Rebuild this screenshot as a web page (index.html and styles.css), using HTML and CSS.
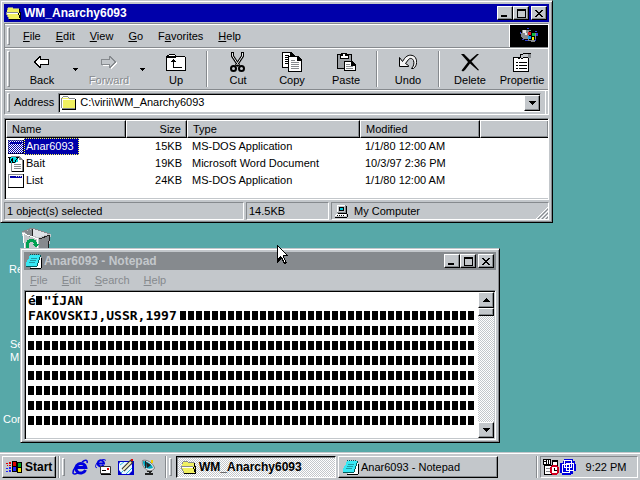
FILE: index.html
```html
<!DOCTYPE html>
<html lang="en">
<head>
<meta charset="utf-8">
<title>Desktop</title>
<link rel="stylesheet" href="styles.css">
</head>
<body>
<svg class="defs" width="0" height="0" aria-hidden="true">
  <defs>
    <pattern id="blue-dither" width="2" height="2" patternUnits="userSpaceOnUse"><path fill="#0000aa" d="M0 0h1v1H0zM1 1h1v1H1z"/></pattern>
  </defs>
  <symbol id="folder-open" viewBox="0 0 16 13">
    <path fill="#f0f060" d="M2 1h6l1 1h4v4h2l-1 6H3L1 8V2z"/>
    <path fill="#868a8e" d="M2 0h5v1H2zM1 1h1v2H1zM7 1h6v1H7zM0 5h12v1H0zM0 6h1v2H0zM1 8h1v2H1zM2 10h1v2H2z"/>
    <path fill="#fff" d="M1 6h11v1H1z"/>
    <path fill="#000" d="M13 2h1v4h-1zM12 6h1v2h-1zM13 8h1v3h-1zM14 5h1v7h-1zM3 12h12v1H3z"/>
  </symbol>
  <symbol id="folder" viewBox="0 0 16 14">
    <path fill="#f0f060" d="M1 2h13v10H1z"/>
    <path fill="#868a8e" d="M2 0h5v1H2zM1 1h1v1H1zM7 1h1v1H7zM8 2h6v1H8zM0 2h1v10H0zM1 12h13v1H1z"/>
    <path fill="#fff" d="M2 1h5v1H2zM1 3h13v1H1zM1 3h1v9H1z"/>
    <path fill="#000" d="M14 3h1v10h-1zM1 13h14v1H1z"/>
  </symbol>
  <symbol id="notepad" viewBox="0 0 16 15">
    <path fill="#fff" d="M5 3h10v11H5z"/>
    <path fill="#000" d="M15 4h1v10h-1zM4 14h11v1H4z"/>
    <path fill="#38e8f4" d="M4 1h10v2l-1 2-1 3-1 3-1 1H0v-2l1-3 2-3z"/>
    <path fill="#005a5a" d="M4 0h1v1H4zM6 0h1v1H6zM8 0h1v1H8zM10 0h1v1h-1zM12 0h1v1h-1zM14 1h1v2h-1zM13 3h1v3h-1zM12 6h1v3h-1zM11 9h1v3h-1zM0 12h11v1H0z"/>
    <path fill="#209aa4" d="M5 4h6v1H5zM4 6h6v1H4zM3 8h6v1H3z"/>
  </symbol>
  <symbol id="dos-window" viewBox="0 0 16 14">
    <path fill="#fff" d="M0 0h15v13H0z"/>
    <path fill="#868a8e" d="M0 0h15v1H0zM0 0h1v13H0z"/>
    <path fill="#0000aa" d="M2 2h12v2H2z"/>
    <path fill="#c3c7cb" d="M8 2h1v1H8zM10 2h1v1h-1zM12 2h1v1h-1z"/>
    <path fill="#000" d="M15 0h1v14h-1zM0 13h16v1H0z"/>
  </symbol>
  <symbol id="minimize" viewBox="0 0 8 8"><path d="M0 6h6v2H0z"/></symbol>
  <symbol id="maximize" viewBox="0 0 9 9"><path fill-rule="evenodd" d="M0 0h9v9H0zM1 2v6h7V2z"/></symbol>
  <symbol id="close" viewBox="0 0 8 7"><path d="M0 0h2v1h1v1h2V1h1V0h2v1H7v1H6v1H5v1h1v1h1v1h1v1H6V6H5V5H3v1H2v1H0V6h1V5h1V4h1V3H2V2H1V1H0z"/></symbol>
  <symbol id="down" viewBox="0 0 7 4"><path d="M0 0h7v1H6v1H5v1H4v1H3V3H2V2H1V1H0z"/></symbol>
  <symbol id="up" viewBox="0 0 7 4"><path d="M3 0h1v1h1v1h1v1h1v1H0V3h1V2h1V1h1z"/></symbol>
</svg>

<div class="screen">
  <main class="desktop">
    <div class="shortcut recycle">
      <svg width="31" height="34" viewBox="0 0 31 34">
        <path fill="#c3c7cb" d="M1 5l10-4 19 6-4 27H5z"/>
        <path fill="#868a8e" d="M3 5l8-3v7l-3 1zM18 12l11-4-4 26h-7z"/>
        <path fill="#dfe3e7" d="M12 2l15 5-9 3-6-1z"/>
        <path fill="none" stroke="#fff" d="M1 6l16 6-1 22M2 7l3 26"/>
        <path fill="none" stroke="#868a8e" d="M1 5l10-4 18 6"/>
        <path fill="none" stroke="#222" d="M11 2v7M29 8l-11 4M29 8l-4 26"/>
        <path fill="none" stroke="#00a050" stroke-width="3" d="M6 18c1-6 8-6 9 0M6 16v6h4"/>
        <path fill="#00a050" d="M12 17h6l-3 4z"/>
      </svg>
      <span class="caption">Re</span>
    </div>
    <div class="shortcut setup"><span class="caption">Se<br>M</span></div>
    <div class="shortcut connect"><span class="caption">Con</span></div>

    <section class="window explorer" aria-label="WM_Anarchy6093">
      <header class="titlebar">
        <svg width="16" height="13"><use href="#folder-open"/></svg>
        <h1 class="title">WM_Anarchy6093</h1>
        <div class="controls">
          <button class="control low" aria-label="Minimize"><svg width="8" height="8"><use href="#minimize"/></svg></button>
          <button class="control" aria-label="Maximize"><svg width="9" height="9"><use href="#maximize"/></svg></button>
          <button class="control last" aria-label="Close"><svg width="8" height="7"><use href="#close"/></svg></button>
        </div>
      </header>
      <div class="bars">
        <nav class="band menuband">
          <span class="grip"></span>
          <button class="menu"><u>F</u>ile</button><button class="menu"><u>E</u>dit</button><button class="menu"><u>V</u>iew</button><button class="menu"><u>G</u>o</button><button class="menu">F<u>a</u>vorites</button><button class="menu"><u>H</u>elp</button>
          <div class="brand">
            <svg width="19" height="16" viewBox="0 0 19 16">
              <path fill="#868a8e" d="M2 2h6v9H3L1 8z"/><path fill="#e8e8e8" d="M3 2h3v3H3zM5 5h2v2H5z"/>
              <path fill="#3040d0" d="M0 4h1v2H0zM2 11h2v1H2zM7 0h2v1H7zM5 12h3v1H5zM15 3h2v1h-2zM16 5h2v3h-2zM15 10h1v3h-1z"/>
              <path fill="#868a8e" d="M8 2h3v1h4v2h1v6h-1v3h-4v-1H8z"/>
              <path fill="#000" d="M9 3h6v9H9z"/><path fill="#e02020" d="M8 4h3v3H8z"/><path fill="#10c040" d="M12 5h3v3h-3z"/><path fill="#10a0f0" d="M8 8h3v3H8z"/><path fill="#f0f000" d="M12 9h2v3h-2z"/>
            </svg>
          </div>
        </nav>
        <div class="band toolband">
          <span class="grip"></span>
          <button class="tool">
            <svg width="18" height="20" viewBox="0 0 18 20"><path fill="#000" d="M6 4h2v3h8v6H8v3H6v-1H5v-1H4v-1H3v-1H2v-1H1V9h1V8h1V7h1V6h1V5h1z"/><path fill="#fff" d="M6 6h1v2h8v4H7v2H6v-1H5v-1H4v-1H3V9h1V8h1V7h1z"/></svg>Back</button>
          <button class="drop" aria-label="Back history"><svg width="5" height="3" viewBox="0 0 5 3"><path d="M0 0h5v1H4v1H3v1H2V2H1V1H0z"/></svg></button>
          <button class="tool off" disabled>
            <svg width="18" height="20" viewBox="0 0 18 20"><path fill="#fff" d="M12 5h-1v3H3v6h8v3h1v-1h1v-1h1v-1h1v-1h1v-1h1v-2h-1V9h-1V8h-1V7h-1V6h-1z"/><path fill="#868a8e" d="M11 4H9v3H1v6h8v3h2v-1h1v-1h1v-1h1v-1h1v-1h1V9h-1V8h-1V7h-1V6h-1V5h-1z"/><path fill="#c3c7cb" d="M11 6h-1v2H2v4h8v2h1v-1h1v-1h1v-1h1V9h-1V8h-1V7h-1z"/></svg>Forward</button>
          <button class="drop" aria-label="Forward history"><svg width="5" height="3" viewBox="0 0 5 3"><path d="M0 0h5v1H4v1H3v1H2V2H1V1H0z"/></svg></button>
          <button class="tool">
            <svg width="20" height="20" viewBox="0 0 20 20"><path fill="#000" d="M3 2h6v1h1v1h9v1h1v14H0V4h1V3h2z"/><path fill="#fff" d="M3 3h6v1H3zM1 5h18v13H1z"/><path fill="#000" d="M1 5h9v1H1zM7 7h1v1h1v1h1v1H8v5h8v1H7v-6H5V9h1V8h1z"/></svg>Up</button>
          <span class="divider"></span>
          <button class="tool">
            <svg class="smooth" width="16" height="20" viewBox="0 0 16 20"><path fill="none" stroke="#000" stroke-width="3" d="M2.500 0v4l6.500 10M12.500 0v4l-6.500 10"/><path fill="none" stroke="#e4e6e8" d="M2.500 1v3l6 9M12.500 1v3l-6 9"/><g fill="none" stroke="#000" stroke-width="2"><circle cx="3.500" cy="16.500" r="2.500"/><circle cx="11.500" cy="16.500" r="2.500"/></g></svg>Cut</button>
          <button class="tool">
            <svg width="20" height="20" viewBox="0 0 20 20"><path fill="#000" d="M0 0h9l4 4v12H0z"/><path fill="#fff" d="M1 1h7v3h3v11H1z"/><path fill="#000" d="M3 3h4v1H3zM3 5h3v1H3zM3 7h3v1H3zM3 9h3v1H3zM3 11h3v1H3zM6 4h10l4 4v12H6z"/><path fill="#fff" d="M7 5h8v4h4v10H7z"/><path fill="#868a8e" d="M9 8h4v1H9zM9 10h8v1H9zM9 12h8v1H9zM9 14h8v1H9zM9 16h8v1H9z"/></svg>Copy</button>
          <button class="tool">
            <svg width="20" height="20" viewBox="0 0 20 20"><path fill="#000" d="M1 2h4V1h6v1h5v15H1z"/><path fill="#9ca0a4" d="M2 3h13v13H2z"/><path fill="#000" d="M4 3h9v4H4z"/><path fill="#fff" d="M5 4h7v2H5zM7 2h2v2H7z"/><path fill="#000" d="M8 9h8l4 4v6H8z"/><path fill="#fff" d="M9 10h6v4h4v4H9z"/><path fill="#868a8e" d="M10 12h4v1h-4zM10 14h7v1h-7zM10 16h7v1h-7z"/></svg>Paste</button>
          <span class="divider"></span>
          <button class="tool">
            <svg class="smooth" width="18" height="20" viewBox="0 0 18 20"><path fill="#f4f4f4" stroke="#000" d="M.5 5.500v9h9v-1l-3-2 3-4c2-2 4-1 5 1 1 3 0 6-2 8h2c4-3 4-9 1-12-3-2-7-2-10 2l-2 3z"/></svg>Undo</button>
          <span class="divider"></span>
          <button class="tool">
            <svg class="smooth" width="18" height="20" viewBox="0 0 18 20"><path fill="#000" d="M0 2h3l6 6 7-6h2l-7.500 7.500L18 18l-1 .5L9 11.500 4 18l-2 1.500-1.500-1L7 10z"/></svg>Delete</button>
          <button class="tool end">
            <svg width="20" height="20" viewBox="0 0 20 20"><path fill="#000" d="M1 5h16v15H1z"/><path fill="#fff" d="M2 6h14v13H2z"/><path fill="#000" d="M4 10h2v1H4zM7 10h8v1H7zM4 13h2v1H4zM7 13h8v1H7zM4 16h2v1H4zM7 16h8v1H7z"/><path fill="#000" d="M8 2h3V1h8v1h-8v1H9v3H8zM6 6h2v1H6zM9 6h2v1H9zM11 5h4v1h-4z"/><path fill="#c3c7cb" d="M9 3h3V2h4v3h-5v1H9z"/><path fill="#868a8e" d="M16 2h3v4h-3z"/></svg>Propertie</button>
        </div>
        <div class="band addressband">
          <span class="grip"></span>
          <label for="address">Address</label>
          <div class="combo">
            <svg width="16" height="14"><use href="#folder"/></svg>
            <input id="address" type="text" value="C:\virii\WM_Anarchy6093">
            <button class="control arrow" aria-label="Open address list"><svg width="7" height="4"><use href="#down"/></svg></button>
          </div>
          <span class="endcap"></span>
        </div>
      </div>
      <div class="listing">
        <table>
          <colgroup><col class="c-name"><col class="c-size"><col class="c-type"><col class="c-date"><col></colgroup>
          <thead><tr><th>Name</th><th class="num">Size</th><th>Type</th><th>Modified</th><th></th></tr></thead>
          <tbody>
            <tr><td><div class="file"><svg width="16" height="14"><use href="#dos-window"/><path fill="url(#blue-dither)" d="M0 0h16v14H0z"/></svg><span class="selected">Anar6093</span></div></td><td class="num">15KB</td><td>MS-DOS Application</td><td>1/1/80 12:00 AM</td><td></td></tr>
            <tr><td><div class="file"><svg width="16" height="16" viewBox="0 0 16 16"><path fill="#868a8e" d="M3 0h9v1h1v1h1v1h1v13H3z"/><path fill="#fff" d="M4 1h7v3h3v11H4z"/><path fill="#000" d="M15 4h1v12h-1zM4 15h11v1H4z"/><path fill="#868a8e" d="M6 8h7v1H6zM6 10h7v1H6zM6 12h7v1H6z"/><path fill="#00d8e0" d="M1 1h9v5H8v1H2z"/><path fill="none" stroke="#000" d="M0 1.500h3M1.500 2v4.500h1L4.500 2v4.500h2L9.500 2M8 1.500h3"/></svg><span>Bait</span></div></td><td class="num">19KB</td><td>Microsoft Word Document</td><td>10/3/97 2:36 PM</td><td></td></tr>
            <tr><td><div class="file"><svg width="16" height="14"><use href="#dos-window"/></svg><span>List</span></div></td><td class="num">24KB</td><td>MS-DOS Application</td><td>1/1/80 12:00 AM</td><td></td></tr>
          </tbody>
        </table>
      </div>
      <footer class="status">
        <div class="field count">1 object(s) selected</div>
        <div class="field bytes">14.5KB</div>
        <div class="field zone">
          <svg width="15" height="13" viewBox="0 0 15 13"><path fill="#868a8e" d="M3 0h9v1h1v7H3z"/><path fill="#fff" d="M3 0h8v1H3zM3 1h1v6H3z"/><path fill="#c3c7cb" d="M4 1h7v6H4z"/><path fill="#000" d="M5 2h5v4H5zM12 1h1v7h-1zM4 8h9v1H4z"/><path fill="#00c8d8" d="M6 3h3v2H6z"/><path fill="#fff" d="M2 9h10v1H2zM1 10h11v1H1z"/><path fill="#000" d="M1 12h12v1H1zM13 9h1v3h-1zM3 10h1v1H3zM5 10h1v1H5zM7 10h1v1H7zM9 10h1v1H9z"/></svg>
          <span>My Computer</span>
          <svg class="sizer smooth" width="12" height="12" viewBox="0 0 12 12"><path stroke="#fff" d="M0 12L12 0M4 12l8-8M8 12l4-4"/><path stroke="#868a8e" d="M2 12L12 2M6 12l6-6M10 12l2-2"/></svg>
        </div>
      </footer>
    </section>

    <section class="window editor" aria-label="Anar6093 - Notepad">
      <header class="titlebar idle">
        <svg width="16" height="15"><use href="#notepad"/></svg>
        <h2 class="title">Anar6093 - Notepad</h2>
        <div class="controls">
          <button class="control low" aria-label="Minimize"><svg width="8" height="8"><use href="#minimize"/></svg></button>
          <button class="control" aria-label="Maximize"><svg width="9" height="9"><use href="#maximize"/></svg></button>
          <button class="control last" aria-label="Close"><svg width="8" height="7"><use href="#close"/></svg></button>
        </div>
      </header>
      <nav class="editor-menu"><button class="menu"><u>F</u>ile</button><button class="menu"><u>E</u>dit</button><button class="menu"><u>S</u>earch</button><button class="menu"><u>H</u>elp</button></nav>
      <div class="page">
        <textarea aria-label="Document text" wrap="off" spellcheck="false">é "ÍJAN
FAKOVSKIJ,USSR,1997</textarea>
        <div class="scroller">
          <button class="control arrow" aria-label="Scroll up"><svg width="7" height="4"><use href="#up"/></svg></button>
          <span class="thumb"></span>
          <button class="control arrow bottom" aria-label="Scroll down"><svg width="7" height="4"><use href="#down"/></svg></button>
        </div>
      </div>
    </section>

    <svg class="pointer" width="12" height="20" viewBox="0 0 12 20"><path fill="#000" d="M0 0h1v1h1v1h1v1h1v1h1v1h1v1h1v1h1v1h1v1h1v1h1v1H7v2h1v2h1v2h1v1H9v1H7v-1H6v-2H5v-2H4v1H3v1H2v1H1v1H0z"/><path fill="#fff" d="M1 2h1v1h1v1h1v1h1v1h1v1h1v1h1v1h1v1H6v3h1v2h1v2H7v-2H6v-2H5v-1H4v-1H3v1H2v1H1z"/></svg>
  </main>

  <footer class="taskbar">
    <button class="start">
      <svg width="17" height="14" viewBox="0 0 17 14"><path fill="#000" d="M6 1h5v1h5v11h-5v-1H6z"/><path fill="#e00000" d="M7 2h3v4H7zM0 3h2v1H0zM3 2h2v2H3zM1 5h1v1H1zM3 5h2v1H3z"/><path fill="#00a020" d="M12 3h3v4h-3z"/><path fill="#2020ff" d="M7 7h3v4H7zM0 8h2v1H0zM3 7h2v2H3zM0 11h2v1H0zM3 10h2v2H3z"/><path fill="#f0e000" d="M12 8h3v4h-3z"/></svg>Start</button>
    <span class="bar-sep"></span><span class="bar-grip"></span>
    <nav class="quick">
      <button aria-label="Internet Explorer"><svg class="smooth" width="16" height="16" viewBox="0 0 16 16"><path fill="none" stroke="#0000dd" stroke-width="3" d="M13.500 11A5 4.800 0 1 1 13.800 8.500H5"/><path fill="none" stroke="#0000dd" stroke-width="1.500" d="M3.500 8C0 12.500.5 15.500 3 15c1.500-.3 3-1.200 4-2M10 3c3-2.500 6-2.500 5 1"/></svg></button>
      <button aria-label="Outlook Express"><svg class="smooth" width="16" height="16" viewBox="0 0 16 16"><path fill="none" stroke="#0000dd" stroke-width="2" d="M8.500 6A3.200 3 0 1 1 9 4.500H3"/><path fill="none" stroke="#0000dd" d="M2 4C0 7 0 9 2 8.500M7 1c2-1 4-1 3 1"/><path fill="#fff" stroke="#333" d="M5.500 7.500h10v7h-10z"/><path fill="#000" d="M6 15h10v1H6zM7 11h4v1H7z"/><path fill="#e00000" d="M12 9h2v2h-2z"/></svg></button>
      <button aria-label="Show Desktop"><svg class="smooth" width="16" height="16" viewBox="0 0 16 16"><path fill="#0000cc" d="M0 2h16v14H0z"/><path fill="#e8f8ff" d="M2 3h10l2 3v6l-3 3H4l-3-4V5z"/><path fill="none" stroke="#30b8d8" d="M2 6l4-3M3 14l3-3M8 15l6-6"/><path stroke="#333" stroke-width="4" d="M5 11l9-9"/><path stroke="#f4ecc0" stroke-width="2" d="M5 11l8-8"/><path fill="#e00000" d="M13 0h2v2h-2z"/></svg></button>
      <button aria-label="View Channels"><svg class="smooth" width="15" height="16" viewBox="0 0 15 16"><path fill="#e8ecf0" stroke="#777" d="M1.500 1.500C6 0 12 4 13.500 9c-1 3-6 4-9 1S1 4 1.500 1.500z"/><path fill="#00a8c0" d="M2 2c4 0 9 3 10 7-3 1-6 1-8-1S2 4 2 2z"/><path fill="#222" d="M4 2h1v7H4zM5 3l5 3-4 3zM6 12h5v1H6zM4 14h8v2H4zM8 12h2v3H8z"/><path fill="#f0d000" d="M10 1h2v3h-2z"/></svg></button>
    </nav>
    <span class="bar-sep"></span><span class="bar-grip"></span>
    <div class="tasks">
      <button class="task active"><svg width="16" height="13"><use href="#folder-open"/></svg>WM_Anarchy6093</button>
      <button class="task"><svg width="16" height="15"><use href="#notepad"/></svg>Anar6093 - Notepad</button>
    </div>
    <span class="bar-sep"></span>
    <div class="tray">
      <svg width="16" height="16" viewBox="0 0 16 16"><path fill="#000" d="M0 0h8v6H0zM9 1h6v6H9zM1 6h10v10H1z"/><path fill="#fff" d="M1 1h2v1H1zM1 3h2v2H1zM4 1h1v4H4zM6 1h1v4H6zM10 3h4v4h-4zM2 7h7v8H2z"/><path fill="#868a8e" d="M3 9h4v1H3zM3 12h4v1H3z"/><path fill="#d00020" d="M9 6h5v1h1v1h1v6h-1v1h-1v1H9v-1H8v-1H7V8h1V7h1z"/><path fill="#fff" d="M9 8h5v6H9z"/><path fill="#000" d="M11 9h1v2h2v1h-3z"/></svg>
      <svg width="16" height="16" viewBox="0 0 16 16"><path fill="#0000dd" d="M4 0h9v2h2v3h1v7h-3v3h-2v1H2v-2H0V4h3z"/><path fill="none" stroke="#fff" d="M4.500 1.500h7v7h-7zM2.500 5.500h7v8h-7zM6.500 4.500h7v7h-7z"/></svg>
      <span class="clock">9:22 PM</span>
    </div>
  </footer>
</div>
</body>
</html>
```
FILE: styles.css
```css
:root {
  --face: #c3c7cb;
  --shade: #868a8e;
  --navy: #0000aa;
  --teal: #57a8a8;
}

* { box-sizing: border-box; }

body {
  margin: 0;
  font: 11px/13px "Liberation Sans", Arial, sans-serif;
  color: #000;
}

svg { display: block; flex: none; shape-rendering: crispEdges; }
svg.smooth { shape-rendering: geometricPrecision; }
.defs { position: absolute; }

button {
  margin: 0;
  padding: 0;
  border: 0;
  background: none;
  font: inherit;
  color: inherit;
}

.screen { display: flex; flex-direction: column; height: 100vh; }
.desktop { position: relative; flex: 1; overflow: hidden; background: var(--teal); }

/* Desktop shortcuts */
.shortcut { position: absolute; color: #fff; white-space: nowrap; }
.shortcut svg { margin-left: 12px; }
.recycle { left: 9px; top: 227px; }
.recycle .caption { display: block; margin-top: 2px; }
.setup { left: 10px; top: 338px; }
.connect { left: 3px; top: 413px; }

/* Windows */
.window {
  position: absolute;
  display: flex;
  flex-direction: column;
  padding: 2px;
  background: var(--face);
  border: 1px solid;
  border-color: var(--face) #000 #000 var(--face);
  box-shadow: inset 1px 1px #fff, inset -1px -1px var(--shade);
}
.window > * { flex: none; margin-left: 1px; margin-right: 1px; }
.explorer { left: 0; top: 0; right: 87px; }
.editor { left: 20px; top: 248px; right: 140px; height: 195px; }

.titlebar {
  display: flex;
  align-items: center;
  gap: 2px;
  height: 18px;
  margin-top: 1px;
  padding: 0 2px;
  background: var(--navy);
  color: #fff;
}
.titlebar.idle { background: var(--shade); color: var(--face); }
.title { margin: 0; font-size: 12px; line-height: 16px; }
.controls { display: flex; margin-left: auto; color: #000; }

.control {
  display: flex;
  align-items: center;
  justify-content: center;
  width: 16px;
  height: 14px;
  background: var(--face);
  border: 1px solid;
  border-color: #fff #000 #000 #fff;
  box-shadow: inset -1px -1px var(--shade);
}
.control.last { margin-left: 2px; }
.control.arrow { width: 16px; height: 16px; }

/* Explorer bars */
.bars { margin-top: 1px; border: 1px solid; border-color: var(--shade) #fff #fff var(--shade); }
.band {
  display: flex;
  align-items: center;
  padding-left: 2px;
  border-top: 1px solid #fff;
  border-bottom: 1px solid var(--shade);
}
.grip {
  flex: none;
  align-self: stretch;
  width: 3px;
  margin: 2px 0;
  border: 1px solid;
  border-color: #fff var(--shade) var(--shade) #fff;
}
.menu { padding: 0 7px; white-space: nowrap; }
.menuband { gap: 1px; height: 24px; }
.menuband .grip { margin-right: 5px; }
.brand {
  display: grid;
  place-items: center;
  align-self: stretch;
  width: 39px;
  margin-left: auto;
  background: #000;
  border-left: 1px solid #fff;
}

.toolband { height: 42px; overflow: hidden; }
.toolband .grip { margin-right: 5px; }
.tool {
  display: flex;
  flex: none;
  flex-direction: column;
  align-items: center;
  gap: 2px;
  width: 54px;
}
.tool.off { color: var(--shade); text-shadow: 1px 1px #fff; }
.tool.end { width: 50px; }
.drop { flex: none; padding: 0 4px; }
.divider {
  flex: none;
  width: 2px;
  height: 36px;
  margin: 0 3px;
  border-left: 1px solid var(--shade);
  border-right: 1px solid #fff;
}

.addressband { height: 24px; gap: 4px; border-bottom: 0; }
.combo {
  display: flex;
  flex: 1;
  align-items: center;
  height: 20px;
  padding-left: 1px;
  background: #fff;
  border: 1px solid;
  border-color: var(--shade) var(--face) var(--face) var(--shade);
  box-shadow: inset 1px 1px #000;
}
.combo svg { margin-left: 1px; }
.combo input {
  flex: 1;
  min-width: 0;
  margin-left: 3px;
  padding: 0;
  border: 0;
  outline: 0;
  background: none;
  font: inherit;
}
.combo .control svg { margin: 0; }
.endcap { align-self: stretch; width: 3px; border-left: 1px solid #fff; }

/* File list */
.listing {
  height: 82px;
  margin-top: 3px;
  padding: 1px 0 0 1px;
  background: #fff;
  border: 1px solid;
  border-color: var(--shade) #fff #fff var(--shade);
  box-shadow: inset 1px 1px #000, inset 0 -1px var(--face);
}
table { width: 100%; border-collapse: separate; border-spacing: 0; table-layout: fixed; }
.c-name { width: 120px; }
.c-size { width: 61px; }
.c-type { width: 173px; }
.c-date { width: 120px; }
th {
  height: 18px;
  padding: 0 5px;
  background: var(--face);
  border: 1px solid;
  border-color: #fff #000 #000 #fff;
  box-shadow: inset -1px -1px var(--shade);
  font-weight: normal;
  text-align: left;
}
th:last-child { border-right: 0; }
td { height: 17px; padding: 0 5px; white-space: nowrap; }
td:first-child { padding: 0 2px; }
.num { text-align: right; }
.file { display: flex; align-items: center; height: 17px; }
.file span { padding: 1px 2px; }
.file .selected {
  padding: 1px 4px 1px 1px;
  background: var(--navy);
  border: 1px dotted #ffff55;
  color: #fff;
}

.status { display: flex; gap: 2px; margin-top: 2px; }
.field {
  display: flex;
  align-items: center;
  height: 18px;
  padding: 0 2px;
  border: 1px solid;
  border-color: var(--shade) #fff #fff var(--shade);
  white-space: nowrap;
}
.count { width: 240px; }
.bytes { width: 83px; }
.zone { flex: 1; gap: 5px; padding-right: 0; }
.sizer { align-self: flex-end; margin-left: auto; }

/* Notepad */
.editor-menu { display: flex; align-items: center; height: 20px; color: var(--shade); }
.editor-menu .menu { padding: 0 8px 0 6px; }
.page {
  display: flex;
  flex: 1;
  background: #fff;
  border: 1px solid;
  border-color: var(--shade) #fff #fff var(--shade);
  padding: 1px;
  box-shadow: inset 1px 1px #000, inset -1px -1px var(--face);
}
.window > .page { flex: 1; min-height: 0; }

/* Unprintable bytes are drawn as solid cells, 6 by 9 in an 8 by 15 grid:
   white row gaps on top, then the cells of line 1, line 2 and lines 3 to 9. */
textarea {
  --cells: repeating-linear-gradient(to right, #000 0 6px, #fff 6px 8px);
  flex: 1;
  min-width: 0;
  margin: 0;
  padding: 1px 0 0 2px;
  border: 0;
  outline: 0;
  resize: none;
  overflow: hidden;
  color: #000;
  font: bold 13px/15px "DejaVu Sans Mono", monospace;
  background:
    repeating-linear-gradient(#fff 0 4px, transparent 4px 13px, #fff 13px 15px),
    var(--cells) 10px 0 / 8px 15px no-repeat,
    var(--cells) 154px 15px / 296px 15px no-repeat,
    var(--cells) 2px 30px / 448px 105px no-repeat,
    #fff;
}
.scroller {
  display: flex;
  flex-direction: column;
  width: 16px;
  background: repeating-conic-gradient(#fff 0 25%, var(--face) 0 50%) 0 0 / 2px 2px;
}
.thumb {
  height: 8px;
  background: var(--face);
  border: 1px solid;
  border-color: #fff #000 #000 #fff;
  box-shadow: inset -1px -1px var(--shade);
}
.scroller .bottom { margin-top: auto; }

.pointer { position: absolute; left: 277px; top: 245px; }

/* Taskbar */
.taskbar {
  display: flex;
  flex: none;
  align-items: center;
  height: 28px;
  padding: 2px 2px 0;
  background: var(--face);
  box-shadow: inset 0 1px var(--face), inset 0 2px #fff;
}
.start, .task {
  display: flex;
  align-items: center;
  height: 22px;
  background: var(--face);
  border: 1px solid;
  border-color: #fff #000 #000 #fff;
  box-shadow: inset -1px -1px var(--shade);
  white-space: nowrap;
}
.start { flex: none; gap: 2px; width: 54px; padding-left: 3px; font-size: 12px; font-weight: bold; }
.bar-sep {
  flex: none;
  width: 2px;
  height: 22px;
  margin: 0 2px;
  border-left: 1px solid var(--shade);
  border-right: 1px solid #fff;
}
.bar-grip {
  flex: none;
  width: 3px;
  height: 18px;
  border: 1px solid;
  border-color: #fff var(--shade) var(--shade) #fff;
}
.quick { display: flex; flex: none; gap: 7px; padding: 0 7px; }
.tasks { display: flex; flex: 1; gap: 2px; min-width: 0; padding-left: 4px; }
.task { flex: 0 1 160px; min-width: 0; gap: 2px; padding-left: 4px; overflow: hidden; }
.task.active {
  background: repeating-conic-gradient(#fff 0 25%, var(--face) 0 50%) 0 0 / 2px 2px;
  border-color: #000 #fff #fff #000;
  box-shadow: inset 1px 1px var(--shade);
  font-size: 12px;
  font-weight: bold;
}
.tray {
  display: flex;
  flex: none;
  align-items: center;
  gap: 1px;
  height: 22px;
  width: 98px;
  padding: 0 2px;
  border: 1px solid;
  border-color: var(--shade) #fff #fff var(--shade);
}
.clock { margin: 0 auto; }
```
